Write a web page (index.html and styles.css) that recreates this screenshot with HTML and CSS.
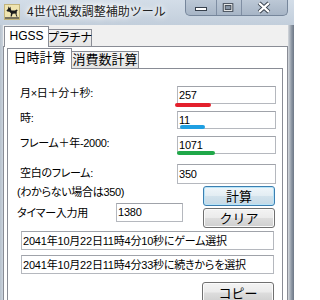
FILE: index.html
```html
<!DOCTYPE html>
<html lang="ja">
<head>
<meta charset="utf-8">
<title>4世代乱数調整補助ツール</title>
<link rel="stylesheet" href="styles.css">
</head>
<body>
<div class="window">
  <div class="titlebar">
    <svg class="app-icon" width="16" height="16" viewBox="0 0 16 16">
      <rect x="0.5" y="0.5" width="15" height="15" fill="#efe4b0" stroke="#c2b47c"/>
      <path d="M4 5 L4.6 2.2 L5.6 4.2 L6.4 2.4 L6.8 5 L7.4 6.4 L11 6.6 L12.6 5.4 L13.8 6.2 L12.8 7.2 L12.6 11 L13.6 12.6 L12.2 12.6 L11.4 9.6 L8.6 9.8 L7.8 12.6 L6.6 12.6 L7 9.2 L5.4 7.8 L3.4 7.6 L2.4 6.6 Z" fill="#1b1b1b"/>
      <rect x="1" y="13.4" width="14" height="1.2" fill="#2a2a2a"/>
    </svg>
    <span class="title">4世代乱数調整補助ツール</span>
    <div class="caption">
      <div class="cbtn cmin">
        <svg width="30" height="15" viewBox="0 0 30 15"><rect x="9.5" y="7.5" width="11" height="3" fill="#fff" stroke="#37404c"/></svg>
      </div>
      <div class="cbtn cmax">
        <svg width="25" height="15" viewBox="0 0 25 15"><rect x="6.5" y="3.5" width="10" height="8" fill="#fff" stroke="#37404c"/><rect x="8.5" y="5.5" width="6" height="4" fill="#8c99aa" stroke="#37404c"/></svg>
      </div>
      <div class="cbtn cclose">
        <svg width="46" height="15" viewBox="0 0 46 15"><path d="M17.5 3 L27.5 12 M27.5 3 L17.5 12" stroke="#37404c" stroke-width="4.2"/><path d="M17.5 3 L27.5 12 M27.5 3 L17.5 12" stroke="#fff" stroke-width="2.2"/></svg>
      </div>
    </div>
  </div>
  <div class="frame-body">
    <div class="client">
      <div class="tabstrip">
        <div class="tab active tab-hgss">HGSS</div>
        <div class="tab tab-pt">プラチナ</div>
      </div>
      <div class="panel outer-panel">
        <div class="tabstrip">
          <div class="tab active tab-date">日時計算</div>
          <div class="tab tab-cons">消費数計算</div>
        </div>
        <div class="panel inner-panel">
          <div class="row">
            <span class="lbl">月×日＋分＋秒:</span>
            <div class="field-wrap">
              <input class="field" type="text" value="257" readonly>
              <span class="mark mark-red"></span>
            </div>
          </div>
          <div class="row">
            <span class="lbl">時:</span>
            <div class="field-wrap">
              <input class="field" type="text" value="11" readonly>
              <span class="mark mark-blue"></span>
            </div>
          </div>
          <div class="row">
            <span class="lbl">フレーム＋年-2000:</span>
            <div class="field-wrap">
              <input class="field" type="text" value="1071" readonly>
              <span class="mark mark-green"></span>
            </div>
          </div>
          <div class="row row-blank">
            <span class="lbl lbl-blank">空白のフレーム:</span>
            <input class="field field-tall" type="text" value="350" readonly>
          </div>
          <div class="mid">
            <div class="mid-left">
              <div class="note">(わからない場合は350)</div>
              <div class="timer">
                <span class="timer-lbl">タイマー入力用</span>
                <input class="field field-timer" type="text" value="1380" readonly>
              </div>
            </div>
            <div class="btns">
              <button class="btn btn-default" type="button">計算</button>
              <button class="btn" type="button">クリア</button>
            </div>
          </div>
          <input class="field field-long" type="text" value="2041年10月22日11時4分10秒にゲーム選択" readonly>
          <input class="field field-long field-long2" type="text" value="2041年10月22日11時4分33秒に続きからを選択" readonly>
          <div class="footer">
            <button class="btn btn-copy" type="button">コピー</button>
          </div>
        </div>
      </div>
    </div>
  </div>
</div>
</body>
</html>
```
FILE: styles.css
```css
html, body {
  margin: 0;
  padding: 0;
}
body {
  width: 294px;
  height: 300px;
  overflow: hidden;
  font-family: "Liberation Sans", "Noto Sans CJK JP", sans-serif;
  font-size: 11px;
  color: #000;
}
.window {
  width: 294px;
  height: 300px;
  display: flex;
  flex-direction: column;
  background: #c3cfdc;
}
.titlebar {
  height: 25px;
  flex: none;
  display: flex;
  align-items: flex-start;
  background: linear-gradient(to bottom, #d3dde8, #c2cedb);
}
.app-icon {
  margin: 4px 0 0 4px;
  flex: none;
}
.title {
  margin: 4px 0 0 7px;
  font-family: "Noto Sans CJK JP", sans-serif;
  font-size: 12px;
  line-height: 14px;
  color: #222;
  text-shadow: 0 0 4px #fff, 0 0 7px #fff, 0 0 10px #fff;
  white-space: nowrap;
}
.caption {
  margin-left: auto;
  margin-right: 6px;
  display: flex;
  height: 16px;
  box-sizing: border-box;
  border: 1px solid #76869b;
  border-top: none;
  border-radius: 0 0 5px 5px;
  overflow: hidden;
  background: linear-gradient(to bottom, #bcc8d6, #a7b5c6);
}
.cbtn {
  height: 15px;
  display: flex;
}
.cbtn + .cbtn {
  border-left: 1px solid #7f8ea3;
}
.cmin { width: 30px; }
.cmax { width: 24px; }
.cclose { width: 45px; }

.frame-body {
  flex: 1;
  display: flex;
  padding: 0 6px 0 3px;
  background:
    linear-gradient(to right, #d5d9de, #8c96a3 60%, #6d7785) right / 6px 100% no-repeat,
    linear-gradient(to right, #b7c1cc, #cbd4de) left / 3px 100% no-repeat,
    #c3cfdc;
}
.client {
  flex: 1;
  background: #f0f0f0;
  display: flex;
  flex-direction: column;
}
.tabstrip {
  height: 21px;
  flex: none;
  display: flex;
  align-items: flex-end;
  padding-left: 1px;
}
.tab {
  box-sizing: border-box;
  height: 17px;
  border: 1px solid #898c95;
  border-bottom: none;
  background: linear-gradient(to bottom, #f4f4f4, #e4e4e4);
  display: flex;
  align-items: center;
  justify-content: center;
  font-size: 12px;
  line-height: 14px;
  white-space: nowrap;
  font-feature-settings: "palt";
}
.tab.active {
  height: 21px;
  margin-bottom: -1px;
  background: #fff;
  position: relative;
  z-index: 1;
  padding-bottom: 2px;
}
.tab-hgss { width: 45px; }
.tab-pt { width: 43px; border-left: none; }
.tab-date { width: 65px; font-size: 13px; }
.tab-cons { width: 67px; border-left: none; font-size: 13px; font-feature-settings: normal; }

.panel {
  border: 1px solid #898c95;
  background: #fff;
}
.outer-panel {
  flex: 1;
  display: flex;
  flex-direction: column;
}
.outer-panel > .tabstrip {
  padding-left: 3px;
}
.inner-panel {
  flex: 1;
  margin: 0 4px 0 3px;
  padding: 17px 6px 0 9px;
  display: flex;
  flex-direction: column;
}
.row {
  display: flex;
  justify-content: space-between;
  align-items: flex-start;
}
.row + .row {
  margin-top: 7px;
}
.row.row-blank {
  margin-top: 10px;
}
.lbl,
.note,
.timer-lbl {
  line-height: 14px;
  font-size: 11px;
  font-feature-settings: "palt";
  letter-spacing: -0.3px;
  white-space: nowrap;
}
.lbl {
  padding-left: 3px;
}
.lbl-blank {
  margin-top: 2px;
}
.field-wrap {
  position: relative;
  width: 99px;
}
.field {
  display: block;
  box-sizing: border-box;
  width: 99px;
  height: 18px;
  margin: 0;
  padding: 0 1px 1px 1px;
  border: 1px solid #b5b8be;
  border-top-color: #a0a3aa;
  background: #fff;
  font-family: "Liberation Sans", "Noto Sans CJK JP", sans-serif;
  font-size: 11px;
  font-feature-settings: "palt";
  letter-spacing: -0.2px;
  color: #000;
  outline: none;
}
.field-tall {
  height: 20px;
}
.mark {
  position: absolute;
  height: 4px;
  border-radius: 2px;
}
.mark-red {
  left: -2px;
  top: 17px;
  width: 36px;
  background: #e3202c;
}
.mark-blue {
  left: 3px;
  top: 14px;
  width: 25px;
  background: #1f9fe2;
}
.mark-green {
  left: 0;
  top: 15px;
  width: 38px;
  background: #20a849;
}
.mid {
  display: flex;
  justify-content: space-between;
}
.note {
  margin-top: 1px;
}
.timer {
  margin-top: 4px;
  display: flex;
  align-items: center;
}
.timer-lbl {
  width: 99px;
}
.field-timer {
  width: 67px;
  height: 19px;
}
.btns {
  display: flex;
  flex-direction: column;
  gap: 2px;
  padding-top: 2px;
  margin-right: 1px;
}
.btn {
  box-sizing: border-box;
  width: 72px;
  height: 20px;
  margin: 0;
  padding: 0;
  border: 1px solid #707070;
  border-radius: 3px;
  background: linear-gradient(to bottom, #f3f3f3 0%, #ebebeb 48%, #dddddd 52%, #cfcfcf 100%);
  box-shadow: inset 0 0 0 1px #fbfbfb;
  font-family: "Noto Sans CJK JP", sans-serif;
  font-size: 13px;
  line-height: 16px;
  color: #000;
}
.btn-default {
  border-color: #3c7fb1;
  background: linear-gradient(to bottom, #f0f6fa 0%, #e3edf3 48%, #d2e2ec 52%, #c5d9e6 100%);
  box-shadow: inset 0 0 0 1px #b8e4f8;
}
.field-long {
  width: 253px;
  height: 19px;
  margin: 3px 0 0 4px;
  padding-left: 1px;
}
.field-long2 {
  margin-top: 5px;
}
.footer {
  display: flex;
  justify-content: flex-end;
  margin-top: 8px;
  padding-right: 2px;
}
.btn-copy {
  height: 21px;
}
```
